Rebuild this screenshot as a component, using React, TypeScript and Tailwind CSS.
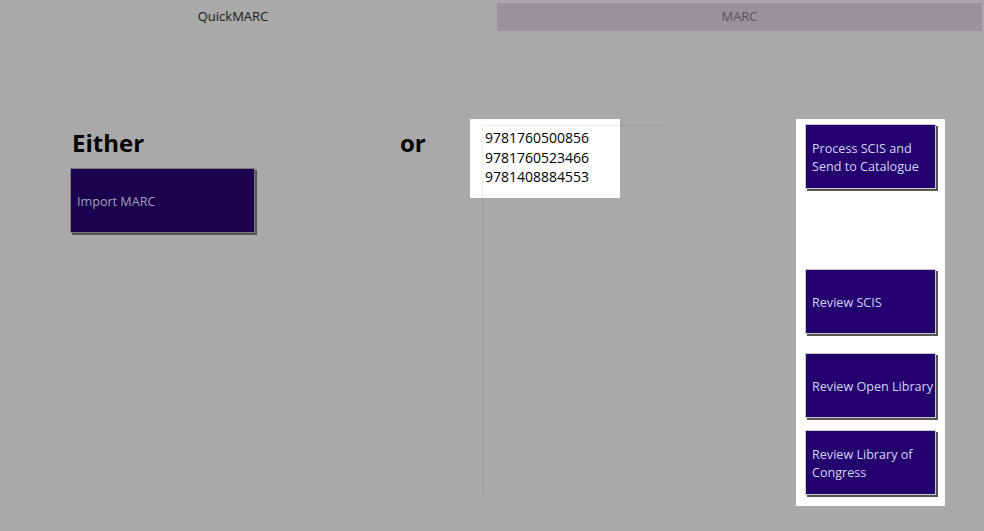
import React from "react";

const font = { fontFamily: '"Open Sans", "Liberation Sans", sans-serif' };

function SideButton({ children, className = "" }: { children: React.ReactNode; className?: string }) {
  return (
    <div
      className={
        "w-[131px] h-[65px] bg-[#24006e] border border-[#c8c8c8] shadow-[2px_2px_0_#555] flex items-center pl-[6px] pt-[2px] text-[12.6px] leading-[18px] text-[#cfd6f4] whitespace-nowrap " +
        className
      }
    >
      <span>{children}</span>
    </div>
  );
}

export default function App() {
  return (
    <div className="w-[984px] h-[531px] bg-[#a9a9a9] overflow-hidden" style={font}>
      {/* tabs */}
      <div className="flex pt-[3px] h-[31px]">
        <div className="w-[466px] h-[28px] flex items-center justify-center text-[13px] text-[#1a1a1a]">
          QuickMARC
        </div>
        <div className="ml-[31px] w-[485px] h-[28px] bg-[#9a929a] flex items-center justify-center text-[13px] text-[#555]">
          MARC
        </div>
      </div>

      {/* main row */}
      <div className="flex items-start mt-[88px]">
        <div className="w-[400px] pl-[70px] pt-[7px]">
          <div className="ml-[2px] text-[24px] font-bold leading-[33px] text-black">Either</div>
          <div className="mt-[9px] w-[185px] h-[65px] bg-[#1a004f] border border-[#7a7a7a] shadow-[2px_2px_0_#555] flex items-center pl-[6px] pt-[4px] text-[12.6px] text-[#a3a3b3]">
            Import MARC
          </div>
        </div>
        <div className="w-[70px] pt-[7px] text-[24px] font-bold leading-[33px] text-black">or</div>
        <div className="w-[326px] relative h-[380px]">
          <div className="w-[150px] h-[79px] bg-white" />
          <div className="absolute left-[12px] top-[6px] w-[181px] h-[370px] border-l border-t border-[rgba(0,0,0,0.07)] pl-[2px] pt-[2px] text-[14px] leading-[19.5px] text-black">
            <div>9781760500856</div>
            <div>9781760523466</div>
            <div>9781408884553</div>
          </div>
        </div>
        <div className="w-[149px] h-[387px] bg-white pl-[9px] pt-[5px] flex flex-col">
          <SideButton>
            Process SCIS and
            <br />
            Send to Catalogue
          </SideButton>
          <SideButton className="mt-[80px]">Review SCIS</SideButton>
          <SideButton className="mt-[19px]">Review Open Library</SideButton>
          <SideButton className="mt-[12px]">
            Review Library of
            <br />
            Congress
          </SideButton>
        </div>
      </div>
    </div>
  );
}
